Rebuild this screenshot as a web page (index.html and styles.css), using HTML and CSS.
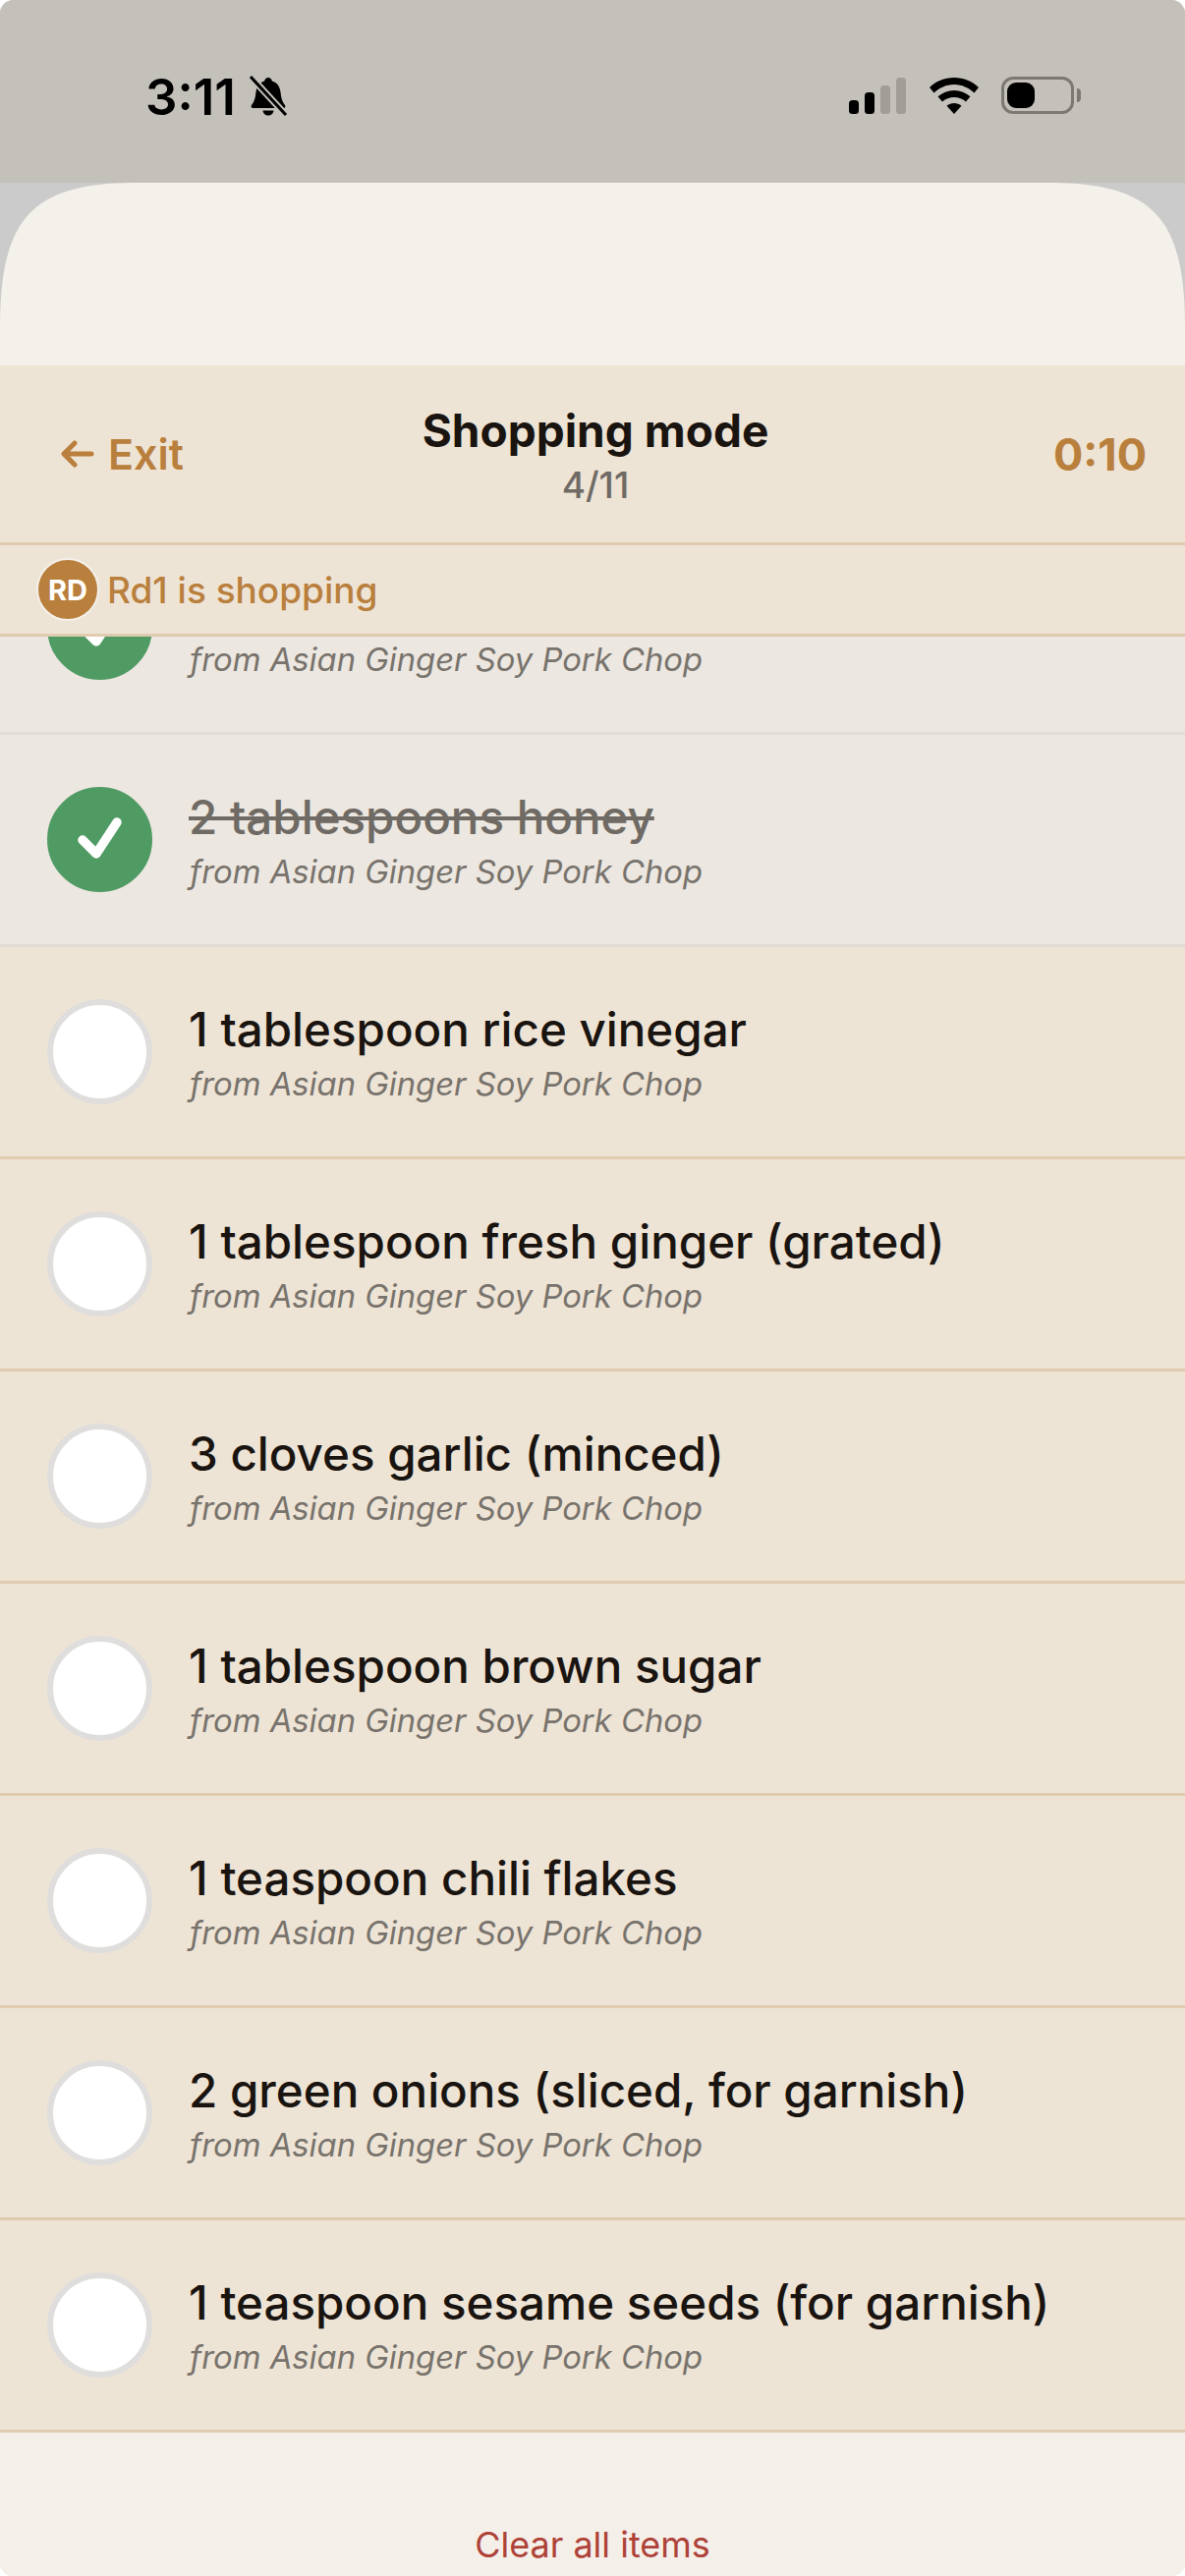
FILE: index.html
```html
<!DOCTYPE html>
<html>
<head>
    <title>Shopping mode</title>
    <link rel="stylesheet" href="styles.css">
</head>
<body>
    <div class="screen">
        <div class="status-bar">
            <div class="status-left">
                <span class="clock">3:11</span>
                <svg class="bell-icon" width="42" height="42" viewBox="0 0 42 42">
                    <path d="M21 2c2 0 3.500 1.500 3.800 3.500 5.500 1.500 8.200 6 8.800 12 .5 5 1.500 9 4.400 12.500 1 1.300.2 3-1.500 3H5.500c-1.700 0-2.500-1.700-1.500-3 2.900-3.500 3.900-7.500 4.400-12.500.6-6 3.300-10.500 8.800-12C17.500 3.500 19 2 21 2z" fill="#000"/>
                    <path d="M15.500 35.500h11c-.3 3-2.700 5-5.500 5s-5.200-2-5.500-5z" fill="#000"/>
                    <path d="M3 1l36 39" stroke="#c4c1ba" stroke-width="7"/>
                    <path d="M3 1l36 39" stroke="#000" stroke-width="3"/>
                </svg>
            </div>
            <div class="status-right">
                <svg width="60" height="38" viewBox="0 0 60 38">
                    <rect x="1" y="24" width="10" height="14" rx="3.500" fill="#000"/>
                    <rect x="17" y="16" width="10" height="22" rx="3.500" fill="#000"/>
                    <rect x="33" y="9" width="10" height="29" rx="3.500" fill="#a19e98"/>
                    <rect x="49" y="1" width="10" height="37" rx="3.500" fill="#a19e98"/>
                </svg>
                <svg width="52" height="38" viewBox="0 0 52 38">
                    <path d="M26 1c10 0 18.500 3.800 25 10l-4.500 5.500C41 11.500 34 8 26 8S11 11.500 5.500 16.500L1 11C7.500 4.800 16 1 26 1z" fill="#000"/>
                    <path d="M26 14c6.500 0 12 2.300 16.500 6.300L38 25.500c-3.300-2.800-7.500-4.500-12-4.500s-8.700 1.700-12 4.500l-4.500-5.200C14 16.300 19.500 14 26 14z" fill="#000"/>
                    <path d="M26 27c2.800 0 5.400 1 7.500 2.700L26 38l-7.500-8.300C20.600 28 23.200 27 26 27z" fill="#000"/>
                </svg>
                <div class="battery">
                    <div class="battery-body"><div class="battery-level"></div></div>
                    <div class="battery-tip"></div>
                </div>
            </div>
        </div>

        <div class="sheet">
            <div class="sheet-top"></div>
            <div class="header">
                <a class="exit">
                    <svg width="34" height="28" viewBox="0 0 34 28">
                        <path d="M31 14H4M14 3L3 14l11 11" fill="none" stroke="#b97f3c" stroke-width="5" stroke-linecap="round" stroke-linejoin="round"/>
                    </svg>
                    Exit
                </a>
                <div class="title-block">
                    <div class="title">Shopping mode</div>
                    <div class="progress">4/11</div>
                </div>
                <div class="timer">0:10</div>
            </div>
            <div class="shopper-band">
                <div class="avatar">RD</div>
                <span>Rd1 is shopping</span>
            </div>

            <div class="list-window">
                <div class="list">
                    <div class="item done">
                        <div class="circle"><svg width="54" height="54" viewBox="0 0 54 54"><path d="M9 27l14 14L44 9" fill="none" stroke="#fff" stroke-width="9.500" stroke-linecap="round" stroke-linejoin="round"/></svg></div>
                        <div class="item-text">
                            <div class="item-name"></div>
                            <div class="item-source">from Asian Ginger Soy Pork Chop</div>
                        </div>
                    </div>
                    <div class="item done">
                        <div class="circle"><svg width="54" height="54" viewBox="0 0 54 54"><path d="M9 27l14 14L44 9" fill="none" stroke="#fff" stroke-width="9.500" stroke-linecap="round" stroke-linejoin="round"/></svg></div>
                        <div class="item-text">
                            <div class="item-name">2 tablespoons honey</div>
                            <div class="item-source">from Asian Ginger Soy Pork Chop</div>
                        </div>
                    </div>
                    <div class="item">
                        <div class="circle"></div>
                        <div class="item-text">
                            <div class="item-name">1 tablespoon rice vinegar</div>
                            <div class="item-source">from Asian Ginger Soy Pork Chop</div>
                        </div>
                    </div>
                    <div class="item">
                        <div class="circle"></div>
                        <div class="item-text">
                            <div class="item-name">1 tablespoon fresh ginger (grated)</div>
                            <div class="item-source">from Asian Ginger Soy Pork Chop</div>
                        </div>
                    </div>
                    <div class="item">
                        <div class="circle"></div>
                        <div class="item-text">
                            <div class="item-name">3 cloves garlic (minced)</div>
                            <div class="item-source">from Asian Ginger Soy Pork Chop</div>
                        </div>
                    </div>
                    <div class="item">
                        <div class="circle"></div>
                        <div class="item-text">
                            <div class="item-name">1 tablespoon brown sugar</div>
                            <div class="item-source">from Asian Ginger Soy Pork Chop</div>
                        </div>
                    </div>
                    <div class="item">
                        <div class="circle"></div>
                        <div class="item-text">
                            <div class="item-name">1 teaspoon chili flakes</div>
                            <div class="item-source">from Asian Ginger Soy Pork Chop</div>
                        </div>
                    </div>
                    <div class="item">
                        <div class="circle"></div>
                        <div class="item-text">
                            <div class="item-name">2 green onions (sliced, for garnish)</div>
                            <div class="item-source">from Asian Ginger Soy Pork Chop</div>
                        </div>
                    </div>
                    <div class="item">
                        <div class="circle"></div>
                        <div class="item-text">
                            <div class="item-name">1 teaspoon sesame seeds (for garnish)</div>
                            <div class="item-source">from Asian Ginger Soy Pork Chop</div>
                        </div>
                    </div>
                </div>
            </div>

            <div class="footer">
                <a class="clear-all">Clear all items</a>
            </div>
        </div>
    </div>
</body>
</html>
```

FILE: styles.css
```css
* {
    box-sizing: border-box;
}
html, body {
    margin: 0;
    padding: 0;
}
body {
    font-family: Inter, "Liberation Sans", sans-serif;
    background-color: #fff;
}
.screen {
    width: 1206px;
    height: 2622px;
    overflow: hidden;
    border-radius: 14px;
    background-color: #cbcbcb;
    display: flex;
    flex-direction: column;
}
.status-bar {
    height: 186px;
    flex-shrink: 0;
    background-color: #c4c1ba;
    display: flex;
    justify-content: space-between;
    padding: 74px 106px 0 148px;
}
.status-left {
    display: flex;
    align-items: flex-start;
    gap: 12px;
}
.clock {
    font-size: 51px;
    font-weight: 600;
    line-height: 50px;
    color: #000;
}
.bell-icon {
    margin-top: 3px;
}
.status-right {
    display: flex;
    align-items: flex-start;
    gap: 22px;
    padding-top: 4px;
}
.battery {
    display: flex;
    align-items: center;
    gap: 3px;
}
.battery-body {
    width: 74px;
    height: 38px;
    border: 3px solid #7c7973;
    border-radius: 12px;
    padding: 3px;
}
.battery-level {
    width: 28px;
    height: 26px;
    background-color: #000;
    border-radius: 9px;
}
.battery-tip {
    width: 4px;
    height: 14px;
    background-color: #7c7973;
    border-radius: 0 7px 7px 0;
}
.sheet {
    flex: 1;
    display: flex;
    flex-direction: column;
    background-color: #f4f0ea;
    clip-path: path("M0 147C0 34 34 0 140 0H1066C1172 0 1206 34 1206 147V2436H0Z");
}
.sheet-top {
    height: 186px;
    flex-shrink: 0;
}
.header {
    height: 183px;
    flex-shrink: 0;
    background-color: #eee4d6;
    border-bottom: 3px solid #dfcbb0;
    display: grid;
    grid-template-columns: 200px 1fr 217px;
    align-items: center;
    padding: 0 39px 0 62px;
}
.exit {
    display: flex;
    align-items: center;
    gap: 14px;
    font-size: 43px;
    font-weight: 600;
    color: #b97f3c;
}
.title-block {
    text-align: center;
    padding-top: 5px;
}
.title {
    font-size: 46px;
    font-weight: 700;
    line-height: 54px;
    color: #1a1410;
}
.progress {
    font-size: 37px;
    font-weight: 500;
    line-height: 48px;
    margin-top: 5px;
    color: #6f6a64;
}
.timer {
    justify-self: end;
    font-size: 45px;
    font-weight: 700;
    color: #b97f3c;
}
.shopper-band {
    height: 93px;
    flex-shrink: 0;
    background-color: #eee4d6;
    border-bottom: 3px solid #dfcbb0;
    display: flex;
    align-items: center;
    gap: 8px;
    padding-left: 37px;
    font-size: 37px;
    font-weight: 500;
    color: #b97f3c;
}
.avatar {
    width: 64px;
    height: 64px;
    border-radius: 50%;
    border: 2px solid #f4f0ea;
    background-color: #b97f3c;
    color: #fff;
    font-size: 29px;
    font-weight: 700;
    display: flex;
    align-items: center;
    justify-content: center;
}
.list-window {
    height: 1828px;
    flex-shrink: 0;
    overflow: hidden;
}
.list {
    margin-top: -116px;
}
.item {
    height: 216px;
    display: flex;
    align-items: center;
    gap: 37px;
    padding-left: 48px;
    background-color: #eee4d6;
    border-bottom: 3px solid #dfcbb0;
}
.item-text {
    padding-top: 3px;
}
.circle {
    width: 107px;
    height: 107px;
    flex-shrink: 0;
    border-radius: 50%;
    background-color: #fff;
    border: 6px solid #dfdedc;
    display: flex;
    align-items: center;
    justify-content: center;
}
.item-name {
    font-size: 47.500px;
    font-weight: 550;
    line-height: 56px;
    min-height: 56px;
    color: #1a1410;
}
.item-source {
    font-size: 32.800px;
    font-style: italic;
    line-height: 44px;
    margin-top: 5px;
    padding-left: 1px;
    color: #78736c;
}
.item.done {
    background-color: #ece7e0;
    border-bottom-color: #e0dcd6;
}
.item.done .circle {
    background-color: #509b64;
    border-color: #509b64;
}
.item.done .item-name {
    color: #6f6a64;
    text-decoration: line-through;
}
.footer {
    flex: 1;
    display: flex;
    justify-content: center;
    align-items: flex-end;
    padding-bottom: 10px;
    background-color: #f5efe9;
}
.clear-all {
    font-size: 36px;
    color: #ae4238;
}
```
